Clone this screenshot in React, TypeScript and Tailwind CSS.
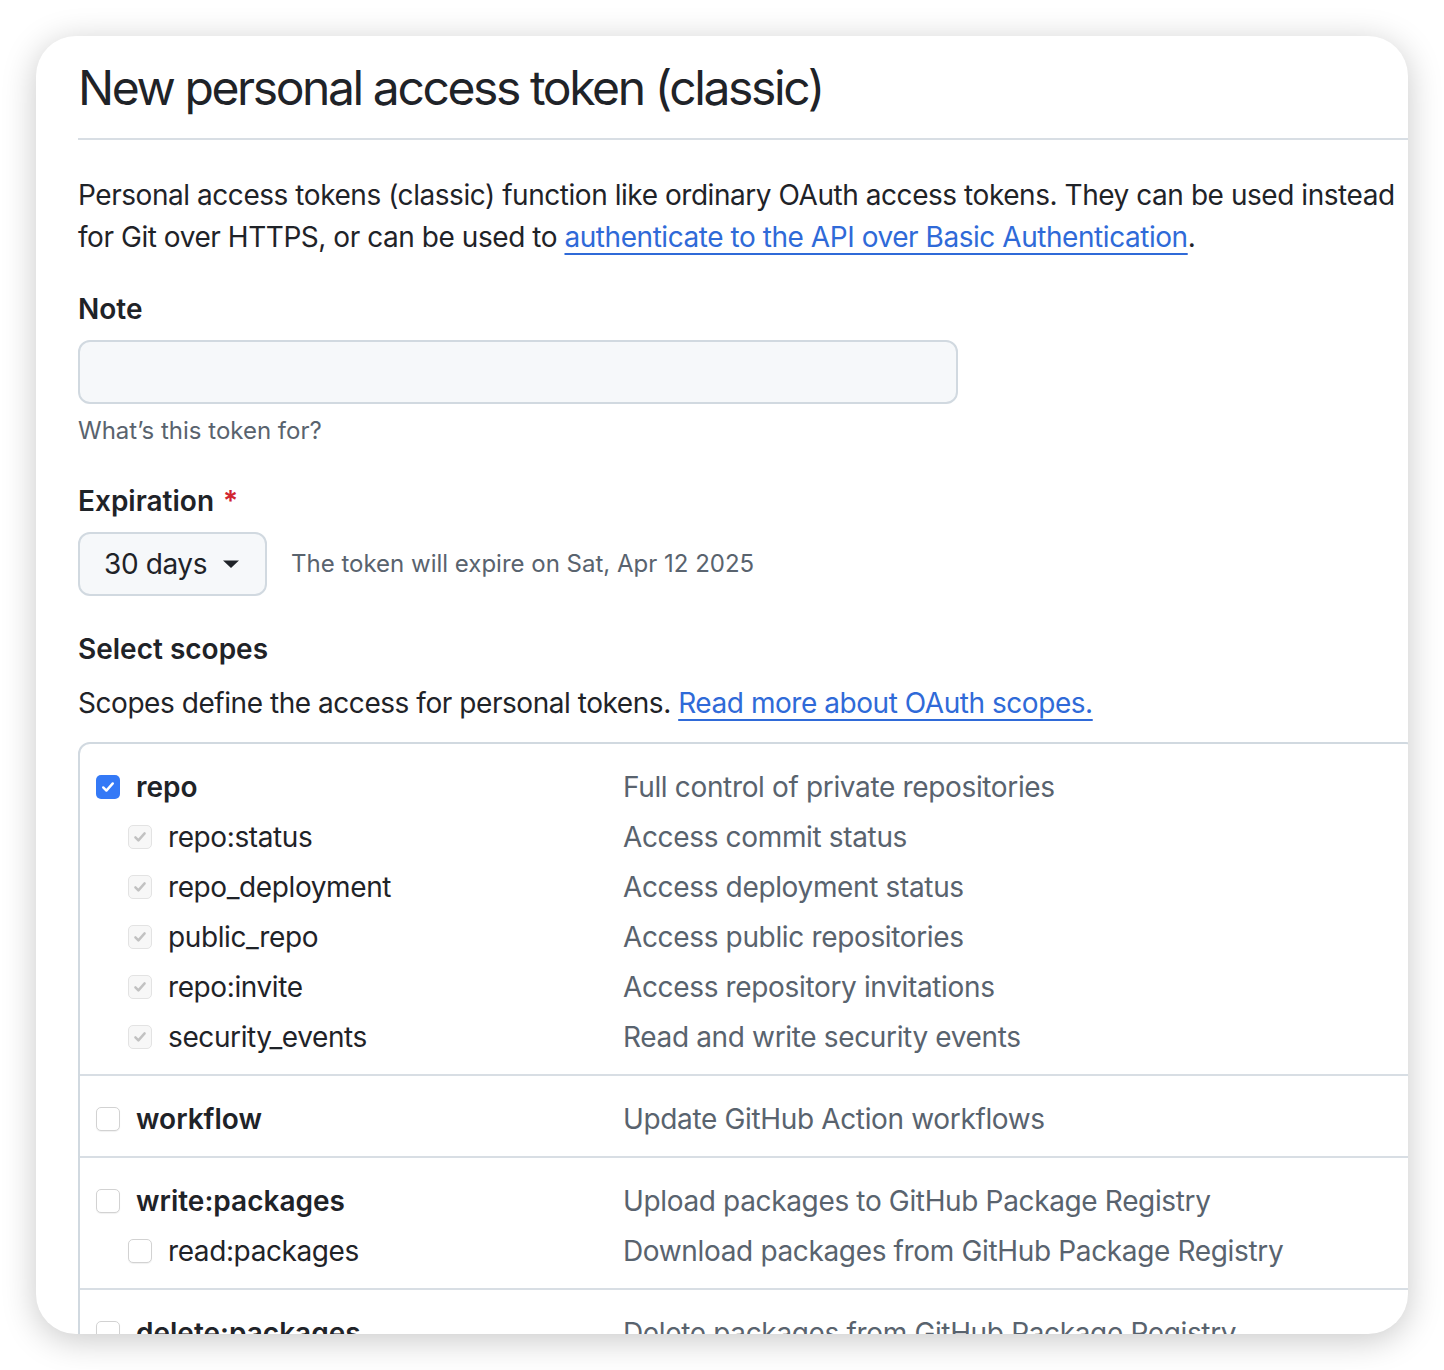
import React from "react";

type Scope = {
  name: string;
  description: string;
  state: "checked" | "checkedDisabled" | "unchecked";
  child?: boolean;
};

const groups: Scope[][] = [
  [
    { name: "repo", description: "Full control of private repositories", state: "checked" },
    { name: "repo:status", description: "Access commit status", state: "checkedDisabled", child: true },
    { name: "repo_deployment", description: "Access deployment status", state: "checkedDisabled", child: true },
    { name: "public_repo", description: "Access public repositories", state: "checkedDisabled", child: true },
    { name: "repo:invite", description: "Access repository invitations", state: "checkedDisabled", child: true },
    { name: "security_events", description: "Read and write security events", state: "checkedDisabled", child: true },
  ],
  [{ name: "workflow", description: "Update GitHub Action workflows", state: "unchecked" }],
  [
    { name: "write:packages", description: "Upload packages to GitHub Package Registry", state: "unchecked" },
    { name: "read:packages", description: "Download packages from GitHub Package Registry", state: "unchecked", child: true },
  ],
  [{ name: "delete:packages", description: "Delete packages from GitHub Package Registry", state: "unchecked" }],
];

function Checkbox({ state }: { state: Scope["state"] }) {
  if (state === "checked") {
    return (
      <span className="flex h-6 w-6 shrink-0 items-center justify-center rounded-[5px] bg-[#3479f6]">
        <svg width="16" height="16" viewBox="0 0 16 16" fill="none">
          <path d="M3.2 8.4l3.2 3.2 6.4-7.2" stroke="#fff" strokeWidth="2.4" strokeLinecap="round" strokeLinejoin="round" />
        </svg>
      </span>
    );
  }
  if (state === "checkedDisabled") {
    return (
      <span className="flex h-6 w-6 shrink-0 items-center justify-center rounded-[5px] border border-[#e3e3e3] bg-[#f7f7f7]">
        <svg width="16" height="16" viewBox="0 0 16 16" fill="none">
          <path d="M3.4 8.4l3 3 6.2-7" stroke="#c2c2c2" strokeWidth="2.5" strokeLinecap="round" strokeLinejoin="round" />
        </svg>
      </span>
    );
  }
  return <span className="h-6 w-6 shrink-0 rounded-[5px] border border-[#d2d2d2] bg-white shadow-[0_1px_1px_rgba(0,0,0,0.06)]" />;
}

function ScopeRow({ scope }: { scope: Scope }) {
  return (
    <div className="flex h-[50px] items-center">
      <div className={`flex w-[527px] shrink-0 items-center gap-4 ${scope.child ? "pl-8" : ""}`}>
        <Checkbox state={scope.state} />
        <span className={scope.child ? "tracking-[-0.4px] text-[#1f2328]" : "font-semibold text-[#1f2328]"}>
          {scope.name}
        </span>
      </div>
      <span className="whitespace-nowrap tracking-[-0.35px] text-[#59636e]">{scope.description}</span>
    </div>
  );
}

export default function App() {
  return (
    <div className="min-h-[1370px] bg-white p-9 font-[Inter,'Noto_Sans',sans-serif] text-[28px] leading-[42px] text-[#1f2328]">
      <div className="h-[1298px] overflow-hidden rounded-[40px] bg-white pl-[42px] pt-4 shadow-[0_6px_34px_rgba(0,0,0,0.22)]">
        <div className="w-[1340px]">
          <h1 className="border-b-2 border-[#d8dee4] pb-[14px] text-[48px] leading-[72px] tracking-[-2.4px]">
            New personal access token (classic)
          </h1>

          <p className="mt-[34px] tracking-[-0.45px]">
            Personal access tokens (classic) function like ordinary OAuth access tokens. They can be used instead for Git over
            HTTPS, or can be used to{" "}
            <a className="text-[#2f6ad8] underline decoration-2 underline-offset-[6px]">
              authenticate to the API over Basic Authentication
            </a>
            .
          </p>

          <div className="mt-[30px]">
            <div className="font-semibold">Note</div>
            <div className="mt-[10px] h-16 w-[880px] rounded-xl border-2 border-[#d1d9e0] bg-[#f6f8fa]" />
            <div className="mt-[9px] text-[24px] leading-[36px] text-[#59636e]">What’s this token for?</div>
          </div>

          <div className="mt-[31px]">
            <div className="font-semibold">
              Expiration <span className="ml-0.5 text-[#d1242f]">*</span>
            </div>
            <div className="mt-[10px] flex items-center gap-6">
              <div className="flex h-16 items-center gap-4 rounded-xl border-2 border-[#d1d9e0] bg-[#f6f8fa] pl-[24px] pr-[26px] tracking-[-0.4px]">
                <span>30 days</span>
                <svg width="16" height="16" viewBox="0 0 16 16">
                  <path d="M0 4.5h16L8 12z" fill="#1f2328" />
                </svg>
              </div>
              <span className="text-[24px] text-[#59636e]">The token will expire on Sat, Apr 12 2025</span>
            </div>
          </div>

          <div className="mt-[32px] font-semibold">Select scopes</div>
          <p className="mt-3 tracking-[-0.45px]">
            Scopes define the access for personal tokens.{" "}
            <a className="text-[#2f6ad8] underline decoration-2 underline-offset-[6px]">Read more about OAuth scopes.</a>
          </p>

          <div className="mt-[18px] rounded-xl border-2 border-[#d1d9e0]">
            {groups.map((group, i) => (
              <div key={i} className={`pb-[12px] pl-4 pt-[18px] ${i > 0 ? "border-t-2 border-[#d8dee4]" : ""}`}>
                {group.map((scope) => (
                  <ScopeRow key={scope.name} scope={scope} />
                ))}
              </div>
            ))}
          </div>
        </div>
      </div>
    </div>
  );
}
